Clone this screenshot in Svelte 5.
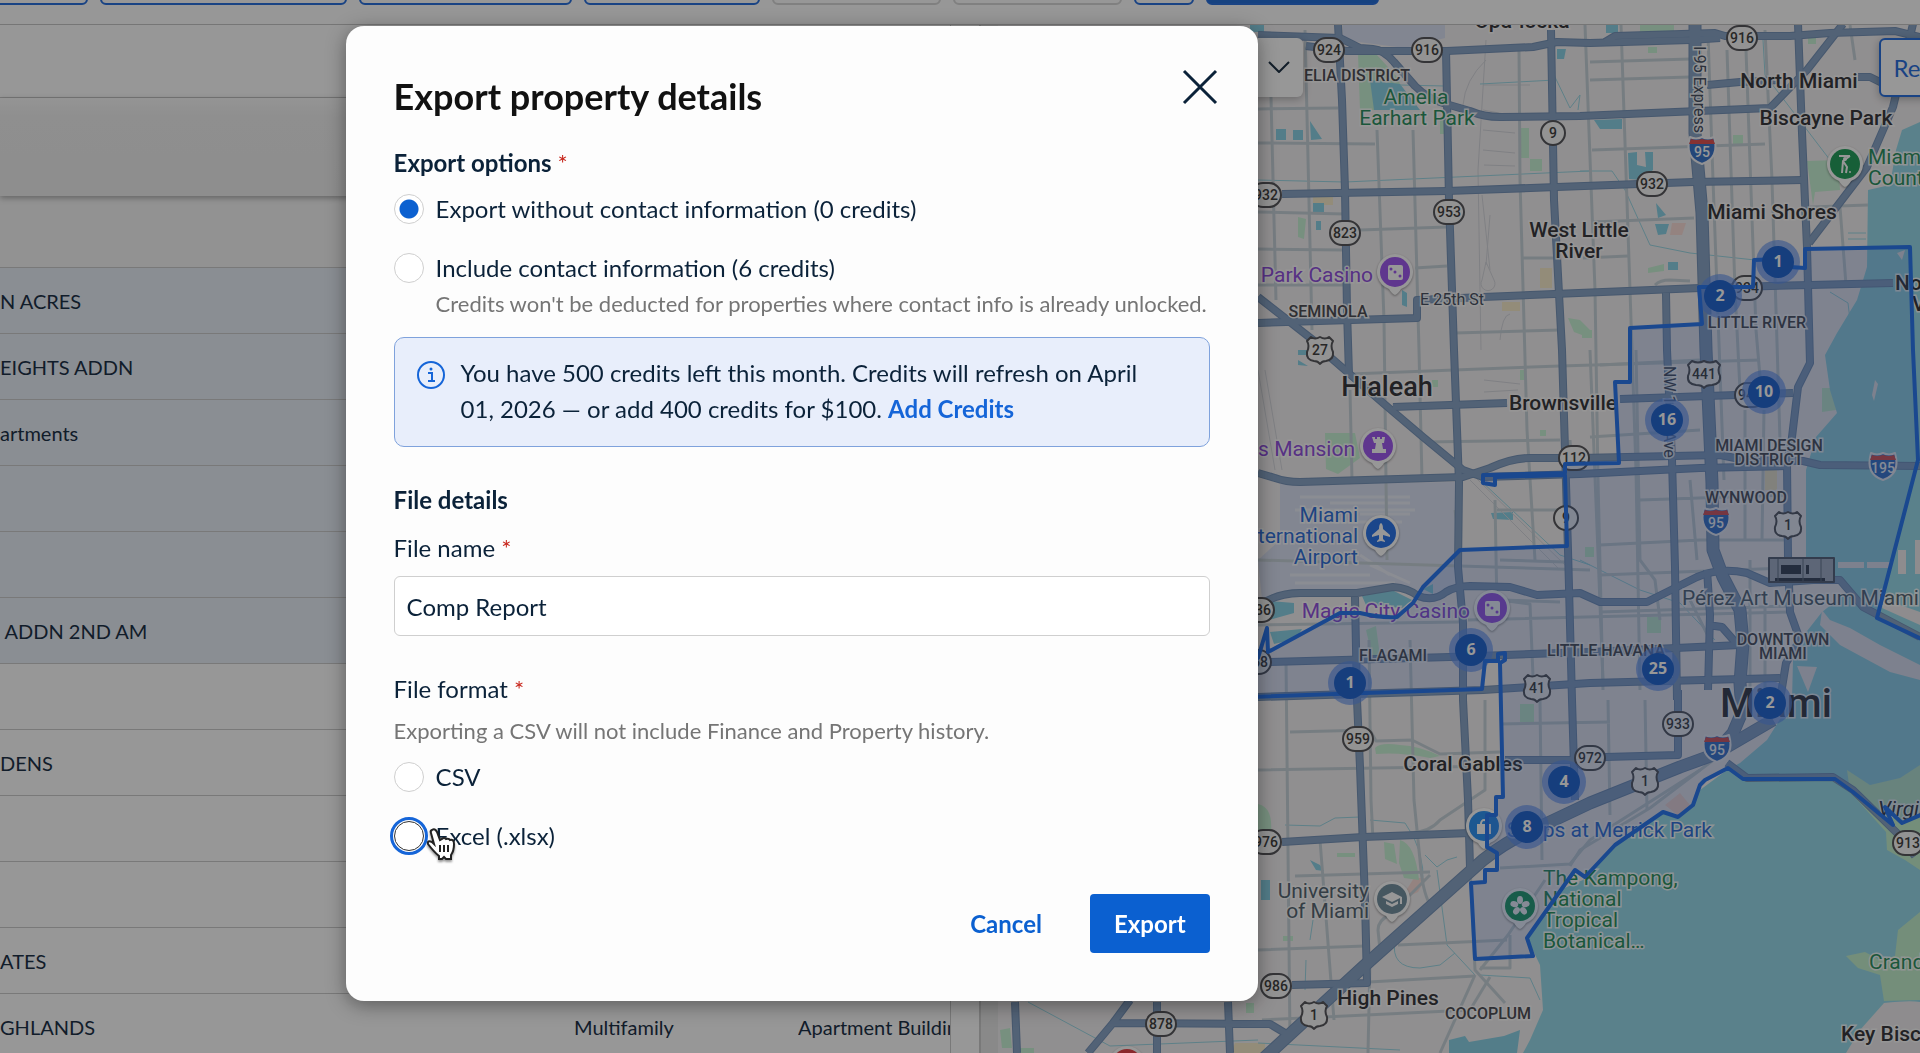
<script lang="ts">
	type Label = {
		text: string;
		x: number;
		y: number;
		kind: string;
		anchor?: string;
	};

	type Badge = { text: string; x: number; y: number };

	let exportOption = $state('basic');
	let fileName = $state('Comp Report');
	let fileFormat = $state('');

	const filters = ['first', 'wide', 'medium', 'small', 'muted', 'muted', 'icon', 'primary'];

	const rows = [
		{ name: 'N ACRES', selected: true },
		{ name: 'EIGHTS ADDN', selected: true },
		{ name: 'artments', selected: true },
		{ name: '', selected: true },
		{ name: '', selected: true },
		{ name: ' ADDN 2ND AM', selected: true },
		{ name: '' },
		{ name: 'DENS' },
		{ name: '' },
		{ name: '' },
		{ name: 'ATES' },
		{ name: 'GHLANDS', type: 'Multifamily', subtype: 'Apartment Building' }
	];

	const majorRoads = [
		'M1338 24L1342 100L1345 190L1347 310L1349 375',
		'M1258 35L1340 38L1360 48L1373 49Q1384 50 1394 62L1415 86Q1428 99 1446 104L1470 111Q1484 117 1500 117L1580 116L1770 108L1807 70L1843 24',
		'M1306 46L1347 51L1447 51L1533 47L1557 42L1590 43L1690 40L1720 38',
		'M1605 42L1615 36L1715 33L1725 36L1790 36L1830 33L1895 31L1920 37',
		'M1446 50L1449 200L1454 350L1459 483L1458 567L1463 623L1463 700L1468 800L1470 867',
		'M1551 30L1554 200L1562 350L1568 550L1572 700L1575 800',
		'M1282 194L1447 191L1557 187L1693 182L1802 180',
		'M1258 323L1417 318L1417 300L1483 297L1700 288L1810 285L1893 283',
		'M1258 297L1313 340L1330 357L1383 403L1423 437L1463 470L1483 477',
		'M1707 85L1740 82L1780 80M1858 77L1870 77L1884 84',
		'M1798 24L1802 133L1807 247L1810 363L1798 387L1792 437L1787 463L1788 557',
		'M1809 243L1867 167L1893 107L1913 24',
		'M1666 293L1667 350L1672 460L1675 567L1677 700',
		'M1258 473L1275 478Q1286 482 1300 482L1463 477L1490 468Q1512 458 1530 458L1580 458L1720 455L1745 460L1803 461L1820 465L1920 466',
		'M1483 477L1580 474L1700 468L1787 466',
		'M1393 407L1507 403M1620 399L1793 393',
		'M1263 603Q1280 593 1300 593L1357 593L1393 587Q1408 588 1418 596Q1434 602 1446 592Q1456 586 1470 586L1510 587L1537 595L1580 593L1600 602L1647 602L1697 577Q1720 567 1747 573L1770 583L1813 580L1840 580L1863 607L1920 637',
		'M1270 662L1450 657L1590 652L1740 645',
		'M1258 697L1483 690L1590 683L1780 678',
		'M1355 597L1357 700L1360 767L1365 900L1367 983L1292 985',
		'M1282 842L1363 837L1470 833',
		'M1505 760L1577 760L1605 757L1678 755L1678 690',
		'M1727 763L1747 778L1833 777L1853 790L1897 833L1915 856',
		'M1015 1002L1017 1053M1130 1000L1113 1023L1088 1053M1113 1023L1270 1024L1290 1036M1157 1002L1157 1053M1228 1002L1230 1053',
		'M1788 557L1790 612L1800 640L1786 663L1780 700',
		'M1707 570L1710 615L1708 690M1708 625L1722 627L1736 643'
	];

	const motorways = [
		'M1695 24L1695 133L1702 213L1706 350L1712 483L1713 550L1723 577L1740 610L1743 643L1740 683L1742 712L1733 733L1713 755',
		'M1262 1060L1363 967L1483 860Q1508 840 1533 830L1590 803L1680 767L1713 755L1773 720'
	];

	const streets = [
		'M1271 97L1276 300M1305 30L1312 330M1377 130L1384 320L1387 560M1413 130L1419 350L1422 480M1519 48L1520 180L1527 430L1535 560',
		'M1258 109L1338 108M1258 143L1375 144M1258 212L1345 214M1258 249L1345 250M1360 230L1447 227M1258 285L1345 285M1415 268L1447 266M1455 333L1560 330M1522 258L1560 258',
		'M1585 25L1595 290L1598 480L1603 690M1621 25L1630 290L1636 470L1640 690M1708 35L1713 180L1724 480M1727 50L1735 290L1740 390M1746 50L1756 330L1762 400M1765 30L1772 180L1780 440',
		'M1590 62L1690 59M1590 80L1690 77M1592 150L1765 144M1592 222L1694 218M1583 258L1628 256M1655 285Q1660 280 1670 280L1690 281M1810 207L1868 205M1840 207L1846 285M1850 25L1855 60',
		'M1350 374L1560 366L1760 360M1425 442L1560 440M1352 480L1350 390M1455 510L1460 550M1495 500L1497 610M1497 510L1560 510M1500 560L1565 562M1500 600L1560 602M1570 440L1572 470',
		'M1590 350L1603 680M1636 350L1640 560L1655 580L1660 620M1600 365L1700 360M1590 437L1700 430M1640 500L1790 495M1600 545L1700 540L1790 540M1745 410L1745 540M1764 410L1762 540M1690 480L1697 560',
		'M1258 625L1460 622M1500 600L1530 604L1534 700M1468 620L1790 612M1286 660L1290 1040M1410 640L1414 800L1420 860Q1422 890 1430 905M1320 840L1334 1020M1369 640L1371 800L1373 840',
		'M1258 770L1500 766M1290 732L1370 730L1376 741L1412 740L1440 754L1500 752M1295 876L1430 872M1258 950L1365 946M1262 1020L1470 1010L1490 977M1369 982L1475 976M1398 945L1507 940M1480 968L1510 968L1510 935',
		'M1470 867L1475 970L1505 1003M1475 975L1440 1053M1485 700L1485 790L1440 820Q1430 832 1410 833M1500 724L1610 722M1540 700L1542 860M1608 700L1610 815M1645 700L1647 810M1500 868L1570 864L1590 840L1700 770',
		'M1570 866L1580 850L1650 808L1720 755M1480 970L1508 935L1545 880M1370 960L1368 1053M1380 950L1378 930Q1378 920 1390 915L1430 875',
		'M1258 560L1590 570M1600 575L1790 568M1600 612L1790 606M1690 600L1710 640M1750 560L1750 690M1765 600L1765 690'
	];

	const railways = [
		'M1486 60Q1465 80 1463 105M1486 40L1478 170L1481 350M1483 85L1530 85M1483 110L1515 116M1483 130L1515 133M1483 150L1515 153M1484 165L1515 166M1482 195L1490 270M1490 215L1486 265M1482 280A7 7 0 1 0 1494 280L1486 262ZM1500 340Q1502 315 1510 314',
		'M1484 380L1520 384M1484 392L1518 390M1470 480L1560 570M1476 478L1566 566M1258 370L1275 470M1265 370L1282 470'
	];

	const canals = [
		'M1258 180L1345 182L1590 171M1480 84L1555 80M1554 75L1570 108L1580 95L1578 110',
		'M1400 85L1445 86M1580 171L1612 171L1625 190L1650 245L1690 253L1755 260M1763 40L1765 75L1830 160',
		'M1580 560L1610 575L1640 590L1680 603L1715 640M1480 480L1560 555L1590 565M1480 975L1530 978L1540 1000',
		'M1285 825L1320 826L1335 818L1360 817M1370 820L1405 823Q1425 850 1423 885M1425 855L1437 867L1447 860L1457 857M1437 870L1447 945L1475 975',
		'M1395 940Q1390 968 1420 968L1440 965L1455 953M1313 920L1310 940M1306 960L1305 990M1028 1002L1110 1046L1258 1040M1258 1043L1400 1050',
		'M1848 233L1866 233M1848 239L1866 239M1830 292L1848 303L1850 320'
	];

	const parks = [
		'M1358 54L1376 54L1398 78L1408 110L1360 110Z',
		'M1520 128h9v30h-9zM1530 159h12v12h-12zM1440 120h8v14h-8zM1298 217l8 2l-2 20l-6-2z',
		'M1640 25h34v10h-34zM1648 47h9v6h-9zM1808 38h8v6h-8zM1733 135h10v10h-10z',
		'M1807 161L1838 160L1840 190L1815 192L1813 205Z',
		'M1648 268l16-4v7l-16 2zM1582 330h10v8h-10z',
		'M1325 433h30l5 25l-22 16l-12-5zM1432 380h6v7h-6zM1540 430h6v6h-6zM1520 370h5v10h-5zM1366 630l10-4l4 30l-8 0z',
		'M1822 388h12l2 22l-14 2zM1647 617h14v16h-14zM1585 547h9v10h-9z',
		'M1375 748Q1380 742 1400 745Q1420 746 1440 756L1430 758Q1400 752 1376 754ZM1520 704h14v18h-14z',
		'M1384 842l10 2l3 20l-12-5zM1400 840q15 4 19 40l-15-2l-5-15zM1337 853h18v4h-18zM1258 804q15 3 13 28h-13zM1283 936h10v5h-10z',
		'M1000 1030l10-2l2 20h-10zM1020 1048h14v5h-14zM1246 1003h8v10h-8z',
		'M1568 318l12 2l10 10v8l-16-6z'
	];

	const ponds = [
		'M1370 80l30 4l20 26l-46 0zM1250 24h14v8h-14zM1276 129h10v11h-10zM1293 130h10v10h-10zM1310 121l12 18l-11 1z',
		'M1313 203h11v10h-11zM1316 221h5v9h-5zM1402 290l5 3l0 14l-5-2zM1557 49h9l-2 10h-7z',
		'M1606 25h12v8h-12zM1594 120l28-1v10h-22zM1628 153l9-1l0 13l9 2l-1-15l8 0l0 18l-12 10l-12-1z',
		'M1656 203l10 12l-8 3zM1655 224h14l-3 10l-8 1zM1668 262h10v8h-10z',
		'M1298 350h9v5h-9zM1298 360l10 6l-10-1zM1258 600l36 3l0 10l-36 10zM1270 632l32-3l-6 10l-22 5zM1362 596l30-6l20 10l-10 8l-36-3zM1423 589l10-5l0 10zM1491 513l22-1l0 8l-20-1z',
		'M1261 880h9v20h-9zM1310 860l10 5l4 6l-8-1z',
		'M1620 852l9-10l10 8l-12 12zM1449 1040l16-4l4 6l35-6l16-6l-3 23h-68z'
	];

	const water =
		'M1920 122L1902 130L1896 150L1890 185L1868 190L1867 267L1857 300L1837 333L1825 355L1830 390L1837 413L1816 437L1806 470L1806 557L1812 575L1840 577L1850 590L1822 612L1800 640L1793 660L1792 700L1767 740L1740 763L1727 770L1700 790L1693 805L1678 817L1663 812L1613 847L1583 880L1560 890L1527 938L1540 965L1543 1010L1530 1040L1523 1053L1920 1053Z';

	const islands = [
		'M1822 610L1830 620L1850 628L1880 645L1920 665L1920 680L1890 672L1840 645L1820 625Z',
		'M1797 666L1817 667L1808 692Z',
		'M1886 600L1920 612L1920 625L1882 608ZM1898 550h8v24h-8zM1915 540h5v34h-5zM1867 562h24v6h-24zM1838 562h26v6h-26z',
		'M1897 253L1905 250L1902 260ZM1872 395l3-15l3 4l-4 17z',
		'M1884 1003Q1910 1000 1920 1002L1920 1053L1846 1053L1860 1030Z'
	];

	const sandbars = [
		'M1847 770L1870 785L1900 778L1920 765L1920 870L1905 860L1887 850L1886 832L1850 792Z',
		'M1846 956L1865 952L1880 960L1895 956L1898 930L1920 912L1920 1000L1884 1001L1880 975L1858 968Z'
	];

	const boundary =
		'M1250 664L1258 658L1267 628L1268 652L1340 613L1360 613Q1380 618 1397 617L1413 603L1423 587L1460 550L1567 546L1565 475L1495 477L1495 485L1483 483L1483 475L1565 473L1565 464L1619 463L1615 382L1630 382L1630 328L1702 324L1699 287L1753 287L1754 260L1780 259L1790 267L1805 268L1805 249L1910 247L1913 350L1918 460L1877 618L1930 643L1930 811L1902 823L1885 807L1893 825L1853 792L1835 779L1743 779L1728 768L1705 780L1700 785L1693 805L1678 817L1663 812L1615 845L1585 877L1575 870L1527 938L1533 956L1475 959L1471 883L1485 882L1485 870L1497 870L1497 853L1487 847L1487 815L1496 815L1496 797L1503 797L1500 663L1505 660L1505 653L1498 654L1498 661L1485 661L1482 689L1250 697Z';

	const labels: Label[] = [
		{ text: 'Opa-locka', x: 1522, y: 28, kind: 'town' },
		{ text: 'ELIA DISTRICT', x: 1304, y: 81, kind: 'district', anchor: 'start' },
		{ text: 'Amelia', x: 1416, y: 104, kind: 'park' },
		{ text: 'Earhart Park', x: 1417, y: 125, kind: 'park' },
		{ text: 'West Little', x: 1579, y: 237, kind: 'town' },
		{ text: 'River', x: 1579, y: 258, kind: 'town' },
		{ text: 'Park Casino', x: 1373, y: 282, kind: 'fun', anchor: 'end' },
		{ text: 'SEMINOLA', x: 1328, y: 317, kind: 'district' },
		{ text: 'E 25th St', x: 1452, y: 305, kind: 'lane' },
		{ text: 'North Miami', x: 1799, y: 88, kind: 'town' },
		{ text: 'Biscayne Park', x: 1826, y: 125, kind: 'town' },
		{ text: 'Miami', x: 1868, y: 164, kind: 'park', anchor: 'start' },
		{ text: 'Country', x: 1868, y: 185, kind: 'park', anchor: 'start' },
		{ text: 'Miami Shores', x: 1772, y: 219, kind: 'town' },
		{ text: 'North Bay', x: 1895, y: 290, kind: 'town', anchor: 'start' },
		{ text: 'Village', x: 1912, y: 311, kind: 'town', anchor: 'start' },
		{ text: 'LITTLE RIVER', x: 1757, y: 328, kind: 'district' },
		{ text: 'Hialeah', x: 1387, y: 396, kind: 'city' },
		{ text: 'Brownsville', x: 1563, y: 410, kind: 'town' },
		{ text: 's Mansion', x: 1355, y: 456, kind: 'fun', anchor: 'end' },
		{ text: 'MIAMI DESIGN', x: 1769, y: 451, kind: 'district' },
		{ text: 'DISTRICT', x: 1769, y: 465, kind: 'district' },
		{ text: 'WYNWOOD', x: 1746, y: 503, kind: 'district' },
		{ text: 'Miami', x: 1358, y: 522, kind: 'airport', anchor: 'end' },
		{ text: 'ternational', x: 1358, y: 543, kind: 'airport', anchor: 'end' },
		{ text: 'Airport', x: 1358, y: 564, kind: 'airport', anchor: 'end' },
		{ text: 'Pérez Art Museum Miami', x: 1682, y: 605, kind: 'museum', anchor: 'start' },
		{ text: 'Magic City Casino', x: 1470, y: 618, kind: 'fun', anchor: 'end' },
		{ text: 'DOWNTOWN', x: 1783, y: 645, kind: 'district' },
		{ text: 'MIAMI', x: 1783, y: 659, kind: 'district' },
		{ text: 'FLAGAMI', x: 1393, y: 661, kind: 'district' },
		{ text: 'LITTLE HAVANA', x: 1606, y: 656, kind: 'district' },
		{ text: 'Miami', x: 1776, y: 717, kind: 'metro' },
		{ text: 'Coral Gables', x: 1463, y: 771, kind: 'town' },
		{ text: 'Virginia Key', x: 1878, y: 816, kind: 'key', anchor: 'start' },
		{ text: 'Shops at Merrick Park', x: 1712, y: 837, kind: 'shop', anchor: 'end' },
		{ text: 'University', x: 1369, y: 898, kind: 'school', anchor: 'end' },
		{ text: 'of Miami', x: 1369, y: 918, kind: 'school', anchor: 'end' },
		{ text: 'The Kampong,', x: 1543, y: 885, kind: 'park', anchor: 'start' },
		{ text: 'National', x: 1543, y: 906, kind: 'park', anchor: 'start' },
		{ text: 'Tropical', x: 1543, y: 927, kind: 'park', anchor: 'start' },
		{ text: 'Botanical…', x: 1543, y: 948, kind: 'park', anchor: 'start' },
		{ text: 'Crandon', x: 1869, y: 969, kind: 'park', anchor: 'start' },
		{ text: 'High Pines', x: 1388, y: 1005, kind: 'town' },
		{ text: 'COCOPLUM', x: 1488, y: 1019, kind: 'district' },
		{ text: 'Key Biscayne', x: 1841, y: 1041, kind: 'town', anchor: 'start' }
	];

	const stateRoads: Badge[] = [
		{ text: '924', x: 1329, y: 50 },
		{ text: '916', x: 1427, y: 50 },
		{ text: '916', x: 1742, y: 38 },
		{ text: '9', x: 1553, y: 133 },
		{ text: '932', x: 1266, y: 195 },
		{ text: '932', x: 1652, y: 184 },
		{ text: '953', x: 1449, y: 212 },
		{ text: '823', x: 1345, y: 233 },
		{ text: '934', x: 1747, y: 288 },
		{ text: '944', x: 1750, y: 395 },
		{ text: '112', x: 1574, y: 458 },
		{ text: '9', x: 1566, y: 518 },
		{ text: '836', x: 1259, y: 610 },
		{ text: '968', x: 1256, y: 662 },
		{ text: '959', x: 1358, y: 739 },
		{ text: '933', x: 1678, y: 724 },
		{ text: '972', x: 1590, y: 758 },
		{ text: '976', x: 1266, y: 842 },
		{ text: '913', x: 1908, y: 843 },
		{ text: '986', x: 1276, y: 986 },
		{ text: '878', x: 1161, y: 1024 }
	];

	const usRoads: Badge[] = [
		{ text: '27', x: 1320, y: 350 },
		{ text: '441', x: 1704, y: 374 },
		{ text: '1', x: 1788, y: 525 },
		{ text: '41', x: 1537, y: 688 },
		{ text: '1', x: 1645, y: 781 },
		{ text: '1', x: 1314, y: 1015 }
	];

	const interstates: Badge[] = [
		{ text: '95', x: 1702, y: 150 },
		{ text: '195', x: 1883, y: 466 },
		{ text: '95', x: 1716, y: 521 },
		{ text: '95', x: 1717, y: 748 }
	];

	const pins = [
		{ x: 1395, y: 272, icon: 'dice', color: '#9a4fee' },
		{ x: 1845, y: 164, icon: 'golf', color: '#169a52' },
		{ x: 1378, y: 446, icon: 'rook', color: '#9a4fee' },
		{ x: 1381, y: 533, icon: 'plane', color: '#1d6cea' },
		{ x: 1492, y: 608, icon: 'dice', color: '#9a4fee' },
		{ x: 1484, y: 826, icon: 'bag', color: '#1f8cf5' },
		{ x: 1392, y: 899, icon: 'cap', color: '#6c8a9c' },
		{ x: 1520, y: 906, icon: 'flower', color: '#139a5c' },
		{ x: 1127, y: 1064, icon: 'dice', color: '#e8363c' }
	];

	const clusters: Badge[] = [
		{ text: '1', x: 1778, y: 262 },
		{ text: '2', x: 1720, y: 296 },
		{ text: '10', x: 1764, y: 392 },
		{ text: '16', x: 1667, y: 420 },
		{ text: '6', x: 1471, y: 650 },
		{ text: '25', x: 1658, y: 669 },
		{ text: '1', x: 1350, y: 683 },
		{ text: '2', x: 1770, y: 703 },
		{ text: '4', x: 1564, y: 782 },
		{ text: '8', x: 1527, y: 827 }
	];
</script>

<div class="page">
	<header class="toolbar">
		{#each filters as size}
			<button type="button" class="filter {size}" aria-label="Filter"></button>
		{/each}
	</header>

	<main>
		<section class="list">
			<div class="summary"></div>
			<div class="actions"></div>
			<div class="spacer"></div>
			<table>
				<tbody>
					{#each rows as row}
						<tr class:selected={row.selected}>
							<td class="name">{row.name}</td>
							<td class="type">{row.type ?? ''}</td>
							<td>{row.subtype ?? ''}</td>
						</tr>
					{/each}
				</tbody>
			</table>
		</section>

		<div class="gutter"></div>

		<section class="map">
			<svg viewBox="998 25 922 1028" preserveAspectRatio="xMinYMin slice">
				<rect x="998" y="24" width="922" height="1030" fill="#f3f0f2" />
				<path
					d="M1343 24h102v14l-40 10l-62-8zM1280 484L1458 482L1458 585L1425 598L1395 585L1357 590L1300 592L1262 600L1258 560L1280 540Z"
					fill="#d9e0f4"
				/>
				<path
					d="M1540 268h12v20h-12zM1502 302h18v9h-18zM1313 196h20v9h-20zM1235 1043h30v10h-35zM1765 470h12v20h-12z"
					fill="#f8ecc8"
				/>
				<path d="M1672 223h14l-4 12l-12 0zM1665 805l15-12l10 12l-10 12zM1400 900l14-22l12 0l-8 14z" fill="#fadbd5" />
				<path
					d="M1300 497h110M1295 510h120M1302 522h100M1330 503h80M1360 514h50M1290 575h80M1295 583h100M1370 565l40 18M1360 555l30 20"
					class="runway"
				/>
				{#each parks as d}
					<path {d} fill="#c5f2d3" />
				{/each}
				{#each ponds as d}
					<path {d} fill="#83d0e6" />
				{/each}
				<path d={water} fill="#90d8e9" />
				{#each sandbars as d}
					<path {d} fill="#c0eecb" />
				{/each}
				{#each islands as d}
					<path {d} fill="#eeecee" />
				{/each}
				{#each railways as d}
					<path {d} class="rail" />
				{/each}
				{#each canals as d}
					<path {d} class="canal" />
				{/each}
				{#each streets as d}
					<path {d} class="street" />
				{/each}
				{#each majorRoads as d}
					<path {d} class="road-edge" />
				{/each}
				{#each motorways as d}
					<path {d} class="motorway-edge" />
				{/each}
				{#each majorRoads as d}
					<path {d} class="road" />
				{/each}
				{#each motorways as d}
					<path {d} class="motorway" />
				{/each}

				<g transform="translate(1769 558)">
					<path d="M0 0h65v24h-65z" fill="#a8b0bd" stroke="#4c5562" stroke-width="2" />
					<path d="M12 7h20v9h-20zM37 7h3v9h-3zM6 20h50v3h-50z" fill="#2d3440" />
					<path d="M9 1v22M34 1v22M52 1v22" stroke="#5d6673" stroke-width="1" />
				</g>

				{#each labels as { text, x, y, kind, anchor }}
					<text {x} {y} class="label {kind}" text-anchor={anchor ?? 'middle'}>{text}</text>
				{/each}
				<text class="label lane" transform="translate(1694 46) rotate(90)">I-95 Express</text>
				<text class="label lane" transform="translate(1664 366) rotate(90)">NW 12th Ave</text>

				{#each stateRoads as { text, x, y }}
					<rect
						x={x - (text.length > 1 ? 15 : 12)}
						y={y - 12}
						width={text.length > 1 ? 30 : 24}
						height="24"
						rx="12"
						class="shield"
					/>
					<text {x} y={y + 5} class="shield-text">{text}</text>
				{/each}
				{#each usRoads as { text, x, y }}
					<path
						transform="translate({x} {y})"
						d={text.length > 2
							? 'M-12 -13Q-6 -10 0 -13Q6 -10 12 -13L16 -9Q13 -4 16 2Q17 10 8 11Q2 11 0 14Q-2 11 -8 11Q-17 10 -16 2Q-13 -4 -16 -9Z'
							: 'M-9 -13Q-5 -10 0 -13Q5 -10 9 -13L13 -9Q10 -4 13 2Q14 10 6 11Q2 11 0 14Q-2 11 -6 11Q-14 10 -13 2Q-10 -4 -13 -9Z'}
						class="shield"
					/>
					<text {x} y={y + 5} class="shield-text">{text}</text>
				{/each}
				{#each interstates as { text, x, y }}
					<g transform="translate({x} {y})">
						<path d="M-12 -13Q-6 -10 0 -13Q6 -10 12 -13Q18 8 0 14Q-18 8 -12 -13Z" fill="#2d6cc9" stroke="#f5f5f8" stroke-width="2" />
						<path d="M-11 -11Q-6 -9 0 -11Q6 -9 11 -11L13 -6H-13Z" fill="#e04848" />
						<text y="7" class="interstate">{text}</text>
					</g>
				{/each}

				{#each pins as { x, y, icon, color }}
					<g transform="translate({x} {y})">
						<path d="M0 23Q-3 22 -6 17A18 18 0 1 1 6 17Q3 22 0 23Z" class="pin" />
						<circle r="15" fill={color} />
						{#if icon === 'dice'}
							<rect x="-7" y="-7" width="15" height="15" rx="2" fill="#fff" />
							<circle cx="-4" cy="-3" r="1.5" fill={color} />
							<circle cx="0" cy="0" r="1.5" fill={color} />
							<circle cx="5" cy="4" r="1.5" fill={color} />
						{:else if icon === 'rook'}
							<path d="M-6 -9h3v2h2v-2h3v2h2v-2h3l-1 6h-2l1 6h3v4h-14v-4h3l1-6h-2z" fill="#fff" />
						{:else if icon === 'plane'}
							<path d="M0 -10Q2 -9 2 -4L9 2V4L2 2V6L4 8V9L0 8L-4 9V8L-2 6V2L-9 4V2L-2 -4Q-2 -9 0 -10Z" fill="#fff" />
						{:else if icon === 'bag'}
							<path d="M-7 -2h14v10h-14zM-4 -2a4 5 0 0 1 8 0h-2a2 3 0 0 0 -4 0z" fill="#fff" />
						{:else if icon === 'cap'}
							<path d="M0 -7L10 -2V5H8V-1L0 3L-10 -2ZM-6 2L0 5L6 2V5L0 8L-6 5Z" fill="#fff" />
						{:else if icon === 'flower'}
							{#each [0, 72, 144, 216, 288] as angle}
								<ellipse cx="0" cy="-6" rx="3" ry="4" fill="#fff" transform="rotate({angle})" />
							{/each}
						{:else}
							<path d="M-6 -8H5M5 -8L-2 -3L2 3L1 9M-2 -3L-3 9" fill="none" stroke="#fff" stroke-width="2" />
							<circle cx="0" cy="-5" r="2" fill="#fff" />
							<circle cx="5" cy="8" r="1" fill="#fff" />
						{/if}
					</g>
				{/each}

				{#each clusters as { x, y }}
					<circle cx={x} cy={y} r="22" fill="#5a8ff0" opacity="0.65" />
				{/each}
				<path d={boundary} class="boundary" />
				{#each clusters as { text, x, y }}
					<circle cx={x} cy={y} r="16" fill="#155dd0" />
					<text {x} y={y + 5} class="cluster">{text}</text>
				{/each}
			</svg>

			<button type="button" class="map-select" aria-label="Map options">
				<svg width="24" height="14" viewBox="0 0 24 14">
					<path d="M2 2L12 12L22 2" fill="none" stroke="#0f2438" stroke-width="2" />
				</svg>
			</button>
			<button type="button" class="reset">Reset</button>
		</section>
	</main>
</div>

<div class="overlay">
	<form class="modal" role="dialog" aria-modal="true" aria-labelledby="dialog-title" onsubmit={(e) => e.preventDefault()}>
		<div class="heading">
			<h1 id="dialog-title">Export property details</h1>
			<button type="button" class="close" aria-label="Close">
				<svg width="36" height="36" viewBox="0 0 36 36">
					<path d="M2 2L34 34M34 2L2 34" fill="none" stroke="#0b2239" stroke-width="3" />
				</svg>
			</button>
		</div>

		<fieldset>
			<legend class="strong">Export options <span class="required">*</span></legend>
			<label class="option">
				<input type="radio" name="contacts" value="basic" bind:group={exportOption} />
				Export without contact information (0 credits)
			</label>
			<label class="option">
				<input type="radio" name="contacts" value="full" bind:group={exportOption} />
				Include contact information (6 credits)
			</label>
			<p class="hint indented">Credits won't be deducted for properties where contact info is already unlocked.</p>
		</fieldset>

		<div class="notice">
			<svg width="28" height="28" viewBox="0 0 28 28">
				<circle cx="14" cy="14" r="13" fill="none" stroke="#1565d8" stroke-width="2" />
				<path d="M11 12H15V20M11 20H18" fill="none" stroke="#1565d8" stroke-width="2" />
				<circle cx="14" cy="8" r="1.5" fill="#1565d8" />
			</svg>
			<p>
				You have 500 credits left this month. Credits will refresh on April 01, 2026 — or add 400 credits for $100.
				<a href="#credits">Add Credits</a>
			</p>
		</div>

		<h2 class="strong">File details</h2>
		<label class="field-label" for="file-name">File name <span class="required">*</span></label>
		<input id="file-name" class="text-input" type="text" bind:value={fileName} />

		<fieldset class="format">
			<legend>File format <span class="required">*</span></legend>
			<p class="hint">Exporting a CSV will not include Finance and Property history.</p>
			<label class="option">
				<input type="radio" name="format" value="csv" bind:group={fileFormat} />
				CSV
			</label>
			<label class="option pressed">
				<input type="radio" name="format" value="xlsx" bind:group={fileFormat} />
				Excel (.xlsx)
				<svg class="pointer" width="32" height="36" viewBox="0 0 32 36">
					<path
						d="M6 3Q9 1 11 5L14 13L16 12Q18 10 20 12Q23 11 24 13Q28 12 28 17Q28 24 25 28V32H20L18 30L16 32H13V29Q8 25 2 17Q1 13 6 15L8 17L5 6Q4 4 6 3Z"
						fill="#fff"
						stroke="#222"
						stroke-width="2"
					/>
					<path d="M14 18V25M18 18V25M22 18V25" stroke="#222" stroke-width="2" />
				</svg>
			</label>
		</fieldset>

		<footer>
			<button type="button" class="cancel">Cancel</button>
			<button type="submit" class="export">Export</button>
		</footer>
	</form>
</div>

<style>
	:global(body) {
		background: #fff;
		color: #0b2239;
		font-family: Lato, 'Open Sans', sans-serif;
		overflow: hidden;
	}

	button,
	input {
		font: inherit;
		color: inherit;
	}

	.page {
		display: flex;
		flex-direction: column;
		height: 100vh;
		overflow: hidden;
	}

	.toolbar {
		display: flex;
		flex: none;
		align-items: flex-end;
		gap: 12px;
		height: 25px;
		padding-bottom: 19px;
		box-sizing: border-box;
		border-bottom: 1px solid #c4c4c4;
	}

	.filter {
		flex: none;
		height: 48px;
		padding: 0;
		background: #fff;
		border: 2px solid #1a66dc;
		border-radius: 6px;
		box-sizing: border-box;
	}

	.first {
		width: 148px;
		margin-left: -60px;
	}

	.wide {
		width: 247px;
	}

	.medium {
		width: 213px;
	}

	.small {
		width: 176px;
	}

	.muted {
		width: 169px;
		border-color: #d5d5d5;
	}

	.icon {
		width: 60px;
	}

	.primary {
		width: 173px;
		background: #1464d6;
	}

	main {
		display: grid;
		flex: 1;
		grid-template-columns: minmax(0, 951fr) minmax(0, 47fr) minmax(0, 922fr);
		min-height: 0;
	}

	.list {
		overflow: hidden;
		border-right: 1px solid #c8c8c8;
	}

	.summary {
		height: 72px;
		border-bottom: 1px solid #c8c8c8;
	}

	.actions {
		position: relative;
		height: 98px;
		background: linear-gradient(#fafafa, #f0f0f0 20%, #eee);
		box-shadow: 0 2px 6px rgba(0, 0, 0, 0.35);
	}

	.spacer {
		height: 71px;
		background: #f6f6f6;
		border-bottom: 1px solid #c8c8c8;
	}

	table {
		width: 100%;
		table-layout: fixed;
		border-collapse: collapse;
		font-size: 20px;
	}

	td {
		height: 65px;
		padding: 0;
		border-bottom: 1px solid #c8c8c8;
		overflow: hidden;
		white-space: pre;
	}

	.name {
		width: 60%;
	}

	.type {
		width: 24%;
		padding-left: 4px;
		box-sizing: border-box;
	}

	.selected {
		background: #e7eef7;
	}

	.gutter {
		background: linear-gradient(90deg, #fff 28px, #c8c8c8 28px, #c8c8c8 30px, #e6e6e6 30px);
	}

	.map {
		position: relative;
		overflow: hidden;
	}

	.map > svg {
		display: block;
		width: 100%;
		height: 100%;
		font-family: Roboto, sans-serif;
	}

	.map path {
		stroke-linejoin: round;
	}

	.street,
	.rail,
	.canal,
	.road,
	.road-edge,
	.motorway,
	.motorway-edge,
	.runway {
		fill: none;
	}

	.runway {
		stroke: #e9edf8;
		stroke-width: 3;
	}

	.street {
		stroke: #c4d0d8;
		stroke-width: 3;
	}

	.rail {
		stroke: #d4d6dc;
		stroke-width: 1;
	}

	.canal {
		stroke: #96d6e4;
		stroke-width: 1;
	}

	.road-edge {
		stroke: #6d8cb4;
		stroke-width: 8;
	}

	.road {
		stroke: #819fc4;
		stroke-width: 6;
	}

	.motorway-edge {
		stroke: #6d8cb4;
		stroke-width: 13;
	}

	.motorway {
		stroke: #819fc4;
		stroke-width: 11;
	}

	.boundary {
		fill: rgba(60, 120, 235, 0.17);
		stroke: #1c6ff0;
		stroke-width: 4;
	}

	.label {
		fill: #2b2b30;
		stroke: #fff;
		stroke-width: 3;
		paint-order: stroke;
		stroke-opacity: 0.85;
		font-size: 21px;
	}

	.town {
		font-weight: 500;
	}

	.city {
		font-size: 27px;
		font-weight: 500;
	}

	.metro {
		font-size: 40px;
		font-weight: 500;
	}

	.district {
		font-size: 16px;
		font-weight: 500;
		fill: #43434a;
	}

	.lane {
		font-size: 16px;
		fill: #3c4658;
	}

	.park {
		fill: #1d8a58;
	}

	.fun {
		fill: #8a45dc;
	}

	.airport,
	.shop {
		fill: #2468d8;
	}

	.museum,
	.school {
		fill: #4b5c6a;
	}

	.key {
		font-style: italic;
	}

	.shield {
		fill: #f7f7f7;
		stroke: #4b4b50;
		stroke-width: 2;
	}

	.shield-text,
	.interstate,
	.cluster {
		font-size: 14px;
		font-weight: 500;
		text-anchor: middle;
		fill: #333;
	}

	.interstate {
		fill: #fff;
	}

	.cluster {
		font-family: 'Open Sans', sans-serif;
		font-size: 16px;
		font-weight: 700;
		fill: #fff;
	}

	.pin {
		fill: #fff;
		filter: drop-shadow(0 1px 1px rgba(0, 0, 0, 0.4));
	}

	.map-select,
	.reset {
		position: absolute;
		top: 13px;
		height: 59px;
		background: #fff;
		box-shadow: 0 2px 8px rgba(0, 0, 0, 0.3);
	}

	.map-select {
		left: 60px;
		width: 245px;
		padding: 0 12px;
		text-align: right;
		border: 0;
		border-radius: 6px;
	}

	.reset {
		right: -46px;
		padding: 0 12px;
		font-size: 24px;
		color: #1a66dc;
		border: 2px solid #1a66dc;
		border-radius: 6px;
	}

	.overlay {
		position: fixed;
		inset: 0;
		padding: 26px 0 0 18vw;
		background: rgba(24, 24, 24, 0.45);
	}

	.modal {
		width: 912px;
		max-width: 95%;
		padding: 40px 48px 48px;
		box-sizing: border-box;
		background: #fdfdfd;
		border-radius: 18px;
		box-shadow: 0 4px 20px rgba(0, 0, 0, 0.4);
		font-size: 24px;
		line-height: 36px;
	}

	.heading {
		display: flex;
		justify-content: space-between;
		align-items: flex-start;
	}

	h1 {
		margin: 6px 0 0;
		font-size: 36px;
		line-height: 48px;
		font-weight: 700;
		color: #111;
	}

	.close {
		display: flex;
		margin: 3px -8px 0 0;
		padding: 0;
		background: none;
		border: 0;
	}

	h2,
	p,
	fieldset {
		margin: 0;
		padding: 0;
		border: 0;
	}

	legend {
		padding: 0;
	}

	.strong {
		font-size: 24px;
		font-weight: 700;
	}

	fieldset {
		margin-top: 25px;
	}

	.required {
		color: #c8281e;
		font-weight: 400;
	}

	.option {
		display: flex;
		align-items: center;
		gap: 12px;
		position: relative;
		width: fit-content;
		margin-top: 10px;
	}

	.option + .option {
		margin-top: 23px;
	}

	input[type='radio'] {
		appearance: none;
		width: 30px;
		height: 30px;
		margin: 0;
		background: #fff;
		border: 1px solid #cfcfcf;
		border-radius: 50%;
	}

	input[type='radio']:checked {
		background: radial-gradient(#0b60d0 9px, #fff 10px);
	}

	.pressed input[type='radio'] {
		border-color: #333;
		outline: 3px solid #1565d8;
		outline-offset: 1px;
	}

	.pointer {
		position: absolute;
		left: 32px;
		top: 9px;
		filter: drop-shadow(0 2px 1px rgba(0, 0, 0, 0.4));
	}

	.hint {
		font-size: 22px;
		color: #757575;
	}

	.indented {
		margin-left: 42px;
	}

	.notice {
		display: flex;
		align-items: flex-start;
		gap: 16px;
		margin-top: 15px;
		padding: 17px 44px 19px 22px;
		background: #e8eefb;
		border: 1px solid #7fa2dc;
		border-radius: 10px;
	}

	.notice svg {
		flex: none;
		margin-top: 6px;
	}

	a {
		color: #1565d8;
		font-weight: 700;
		text-decoration: none;
	}

	h2 {
		margin-top: 35px;
	}

	.field-label {
		display: block;
		margin-top: 12px;
	}

	.text-input {
		width: 100%;
		height: 60px;
		margin-top: 10px;
		padding: 0 12px;
		box-sizing: border-box;
		background: #fff;
		border: 1px solid #cfcfcf;
		border-radius: 6px;
	}

	.format {
		margin-top: 35px;
	}

	.format .hint {
		margin-top: 6px;
	}

	footer {
		display: flex;
		justify-content: flex-end;
		gap: 24px;
		margin-top: 40px;
	}

	footer button {
		height: 59px;
		padding: 0 24px;
		font-weight: 700;
		border: 0;
		border-radius: 4px;
	}

	.cancel {
		color: #0b60d0;
		background: none;
	}

	.export {
		color: #fff;
		background: #0b60d0;
	}
</style>
